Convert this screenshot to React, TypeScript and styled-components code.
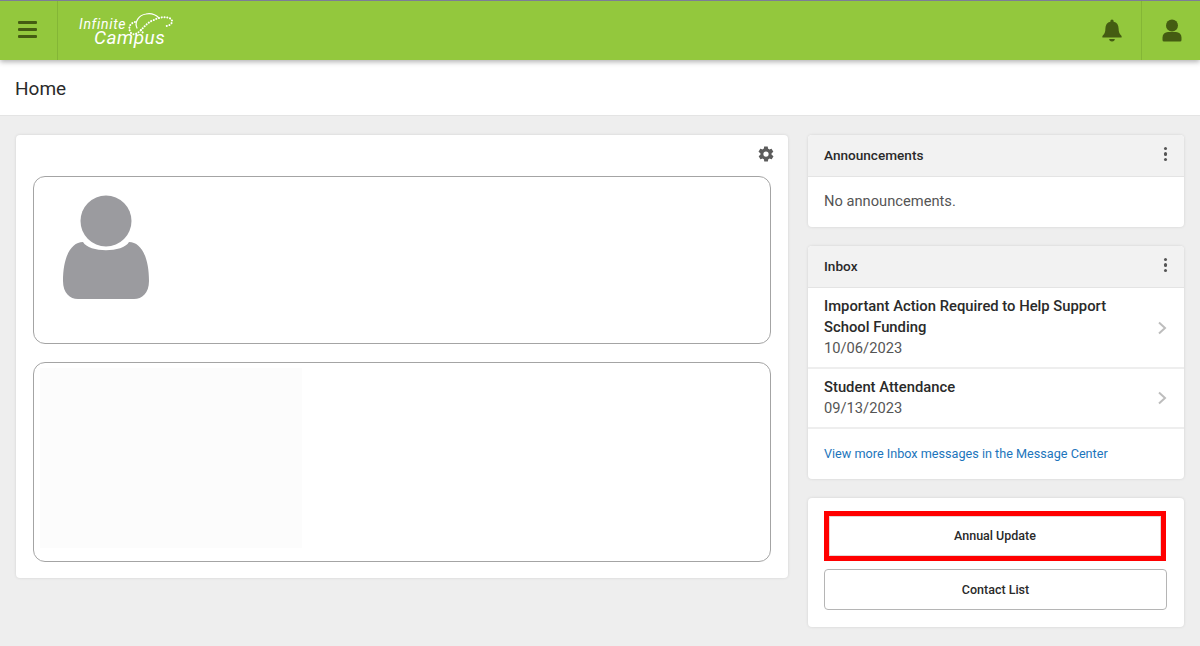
import React, {FC} from 'react';
import styled, {createGlobalStyle} from 'styled-components';

const GlobalStyle = createGlobalStyle`
  html, body {
    margin: 0;
    padding: 0;
    background: #eeeeee;
    font-family: Roboto, "Liberation Sans", sans-serif;
    color: #2a2a2a;
  }
  * {
    box-sizing: border-box;
  }
`

const Page = styled.div`
  width: 1200px;
  height: 646px;
  overflow: hidden;
  background: #eeeeee;
`

const TopBar = styled.header`
  height: 60px;
  display: flex;
  background: #93c83d;
  border-top: 1px solid #7d7d96;
  box-shadow: 0 2px 5px rgba(0, 0, 0, 0.3);
  position: relative;
  z-index: 2;
`

const MenuCell = styled.div`
  width: 58px;
  display: flex;
  align-items: center;
  justify-content: center;
  border-right: 1px solid #84b636;
  padding: 0 3px 3px 0;
`

const Hamburger = styled.div`
  width: 19px;
  display: flex;
  flex-direction: column;
  gap: 4px;

  span {
    height: 3px;
    border-radius: 1px;
    background: #445c12;
  }
`

const Logo = styled.div`
  position: relative;
  display: flex;
  flex-direction: column;
  width: 96px;
  height: 29px;
  margin: 17px 0 0 21px;
  color: #ffffff;
  font-style: italic;

  svg {
    position: absolute;
    left: 47px;
    top: -6px;
  }
`

const LogoTop = styled.span`
  font-size: 14px;
  line-height: 13px;
  letter-spacing: 0.7px;
`

const LogoBottom = styled.span`
  margin-left: 15px;
  font-size: 19px;
  line-height: 14px;
  letter-spacing: 0.5px;
`

const Spacer = styled.div`
  flex: 1;
`

const IconCell = styled.div<{ $divider?: boolean }>`
  width: ${p => (p.$divider ? '59px' : '60px')};
  display: flex;
  align-items: center;
  justify-content: center;
  padding-left: 2px;
  border-left: ${p => (p.$divider ? '1px solid #84b636' : 'none')};
`

const TitleBar = styled.div`
  height: 56px;
  display: flex;
  align-items: center;
  padding: 1px 15px 0;
  background: #ffffff;
  border-bottom: 1px solid #e4e4e4;
  font-size: 19px;
`

const Content = styled.main`
  display: grid;
  grid-template-columns: 772px 376px;
  column-gap: 20px;
  align-items: start;
  padding: 19px 16px 0;
`

const Card = styled.section`
  background: #ffffff;
  border-radius: 4px;
  box-shadow: 0 0 3px rgba(0, 0, 0, 0.12);
  overflow: hidden;
`

const MainCard = styled(Card)`
  height: 443px;
  padding: 10px 17px 17px;
`

const GearRow = styled.div`
  height: 31px;
  display: flex;
  justify-content: flex-end;
  margin-right: -4px;
`

const PersonBox = styled.div<{ $height: number }>`
  height: ${p => p.$height}px;
  border: 1px solid #a4a4a4;
  border-radius: 12px;
  margin-bottom: 18px;
`

const PhotoBox = styled(PersonBox)`
  padding: 18px 28px;
`

const FadedBox = styled(PersonBox)`
  padding: 5px 6px;
`

const Faded = styled.div`
  width: 262px;
  height: 180px;
  background: #fcfcfc;
`

const SideColumn = styled.div`
  display: flex;
  flex-direction: column;
  gap: 19px;
`

const PanelHeader = styled.div`
  height: 42px;
  display: flex;
  align-items: center;
  justify-content: space-between;
  padding: 0 17px 2px 16px;
  background: #f2f2f2;
  border-bottom: 1px solid #e4e4e4;
  font-size: 13.6px;
  font-weight: 500;
`

const Dots = styled.div`
  display: flex;
  flex-direction: column;
  gap: 2px;
  margin-bottom: 1px;

  span {
    width: 3.5px;
    height: 3.5px;
    border-radius: 50%;
    background: #555555;
  }
`

const EmptyText = styled.div`
  height: 50px;
  padding: 16px 16px 0;
  font-size: 14.7px;
  line-height: 17px;
  color: #555555;
`

const InboxRow = styled.div<{ $height: number }>`
  height: ${p => p.$height}px;
  display: flex;
  align-items: center;
  justify-content: space-between;
  padding: 0 17px 0 16px;
  border-bottom: 2px solid #eeeeee;
`

const Subject = styled.div`
  font-size: 14.8px;
  line-height: 21px;
  font-weight: 500;
  color: #2a2a2a;
`

const DateText = styled.div`
  font-size: 14.7px;
  line-height: 21px;
  color: #555555;
`

const MoreLink = styled.a`
  display: block;
  height: 50px;
  padding: 17px 16px 0;
  font-size: 12.65px;
  line-height: 16px;
  color: #1c75bc;
`

const ActionsCard = styled(Card)`
  display: flex;
  flex-direction: column;
  gap: 8px;
  padding: 13px 16px 17px;
  height: 129px;
`

const ActionButton = styled.button`
  height: 41px;
  width: 343px;
  border: 1px solid #b5b5b5;
  border-radius: 4px;
  background: #ffffff;
  font-family: inherit;
  font-size: 12.5px;
  font-weight: 500;
  color: #2a2a2a;
`

const HighlightButton = styled(ActionButton)`
  height: 50px;
  width: 342px;
  padding-bottom: 2px;
  border: 5px solid #ff0000;
  border-radius: 0;
  box-shadow: inset 0 0 0 1px #e2d8d8;
`

const Chevron: FC = () => (
    <svg width="10" height="14" viewBox="0 0 10 14" fill="none">
        <path d="M2 1.5 L8 7 L2 12.5" stroke="#bdbdbd" strokeWidth="2" />
    </svg>
)

export default function App() {
    return (
        <Page>
            <GlobalStyle />
            <TopBar>
                <MenuCell>
                    <Hamburger><span /><span /><span /></Hamburger>
                </MenuCell>
                <Logo>
                    <LogoTop>Infinite</LogoTop>
                    <LogoBottom>Campus</LogoBottom>
                    <svg width="50" height="26" viewBox="0 0 50 26" fill="none" stroke="#ffffff" strokeLinecap="round">
                        <path d="M9 10 C4 11 1.5 16 5 21 C8 24 12 21 15 18 C19 14 22 10 28 8 C33 5 41 4 45 7 C48 10 44 14 40 14" strokeWidth="2" strokeDasharray="0.1 2.7" />
                        <path d="M11 16 C8 10 13 3 20 2 C25 1 30 3 33 6" strokeWidth="1.2" />
                        <path d="M15 18 C16 20 17 21 18 21" strokeWidth="2" strokeDasharray="0.1 2.7" />
                    </svg>
                </Logo>
                <Spacer />
                <IconCell>
                    <svg width="22" height="23" viewBox="0 0 22 23" fill="#445c12">
                        <path d="M11 0.5 a1.6 1.6 0 0 1 1.6 1.6 v0.6 C16 3.4 17.6 6 17.6 9.6 c0 4 1 5.6 3 7.4 v1.4 H1.4 v-1.4 c2-1.8 3-3.4 3-7.4 C4.4 6 6 3.4 9.4 2.7 v-0.6 A1.6 1.6 0 0 1 11 0.5 Z" />
                        <path d="M8.2 20 h5.6 a2.8 2.4 0 0 1-5.6 0 Z" />
                    </svg>
                </IconCell>
                <IconCell $divider>
                    <svg width="20" height="23" viewBox="0 0 20 23" fill="#445c12">
                        <circle cx="10" cy="6.5" r="6" />
                        <path d="M6 13 h8 a5.5 5.5 0 0 1 5.5 5.5 v2.5 a1.5 1.5 0 0 1-1.5 1.5 H2 a1.5 1.5 0 0 1-1.5-1.5 v-2.5 A5.5 5.5 0 0 1 6 13 Z" />
                    </svg>
                </IconCell>
            </TopBar>
            <TitleBar>Home</TitleBar>
            <Content>
                <MainCard>
                    <GearRow>
                        <svg width="18" height="18" viewBox="0 0 24 24" fill="#5c5c5c">
                            <path fillRule="evenodd" d="M19.4 13c.1-.3.1-.7.1-1s0-.7-.1-1l2.1-1.6c.2-.2.2-.4.1-.6l-2-3.5c-.1-.2-.4-.3-.6-.2l-2.5 1c-.5-.4-1.1-.7-1.7-1l-.4-2.6c0-.3-.2-.4-.5-.4h-4c-.3 0-.5.2-.5.4l-.4 2.6c-.6.3-1.2.6-1.7 1l-2.5-1c-.2-.1-.5 0-.6.2l-2 3.5c-.1.2-.1.5.1.6L4.6 11c0 .3-.1.7-.1 1s0 .7.1 1l-2.1 1.6c-.2.2-.2.4-.1.6l2 3.5c.1.2.4.3.6.2l2.5-1c.5.4 1.1.7 1.7 1l.4 2.6c0 .3.2.4.5.4h4c.3 0 .5-.2.5-.4l.4-2.6c.6-.3 1.2-.6 1.7-1l2.5 1c.2.1.5 0 .6-.2l2-3.5c.1-.2.1-.5-.1-.6L19.4 13ZM12 15.5a3.5 3.5 0 1 1 0-7 3.5 3.5 0 0 1 0 7Z" />
                        </svg>
                    </GearRow>
                    <PhotoBox $height={168}>
                        <svg width="88" height="105" viewBox="0 0 88 105" fill="#9b9b9f">
                            <circle cx="44" cy="26" r="25.5" />
                            <path d="M21 47 C27 58 61 58 67 47 C79 47 87 62 87 86 C87 98 80 104 72 104 H16 C8 104 1 98 1 86 C1 62 9 47 21 47 Z" />
                        </svg>
                    </PhotoBox>
                    <FadedBox $height={200}>
                        <Faded />
                    </FadedBox>
                </MainCard>
                <SideColumn>
                    <Card>
                        <PanelHeader>
                            Announcements
                            <Dots><span /><span /><span /></Dots>
                        </PanelHeader>
                        <EmptyText>No announcements.</EmptyText>
                    </Card>
                    <Card>
                        <PanelHeader>
                            Inbox
                            <Dots><span /><span /><span /></Dots>
                        </PanelHeader>
                        <InboxRow $height={81}>
                            <div>
                                <Subject>Important Action Required to Help Support<br />School Funding</Subject>
                                <DateText>10/06/2023</DateText>
                            </div>
                            <Chevron />
                        </InboxRow>
                        <InboxRow $height={60}>
                            <div>
                                <Subject>Student Attendance</Subject>
                                <DateText>09/13/2023</DateText>
                            </div>
                            <Chevron />
                        </InboxRow>
                        <MoreLink>View more Inbox messages in the Message Center</MoreLink>
                    </Card>
                    <ActionsCard>
                        <HighlightButton>Annual Update</HighlightButton>
                        <ActionButton>Contact List</ActionButton>
                    </ActionsCard>
                </SideColumn>
            </Content>
        </Page>
    );
}
